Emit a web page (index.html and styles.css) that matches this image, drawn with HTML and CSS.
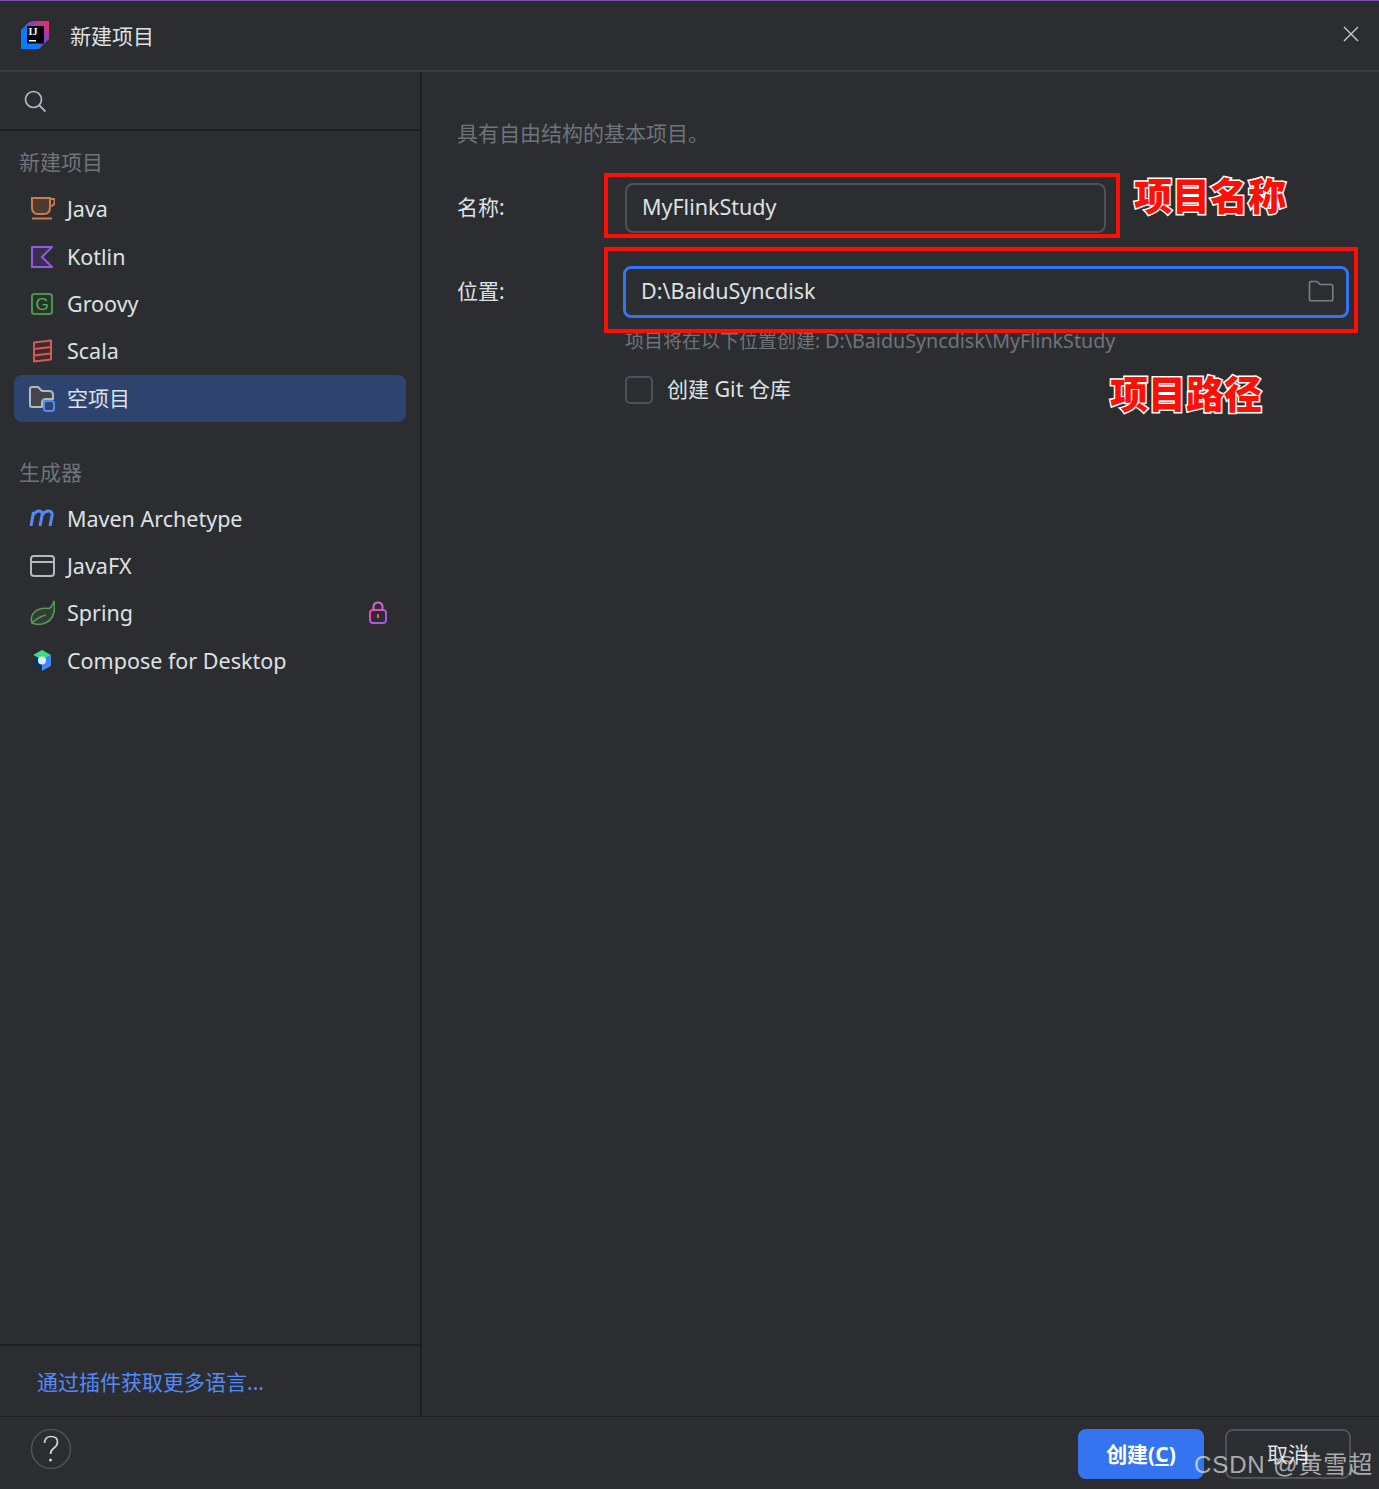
FILE: index.html
```html
<!DOCTYPE html>
<html lang="zh-CN">
<head>
<meta charset="utf-8">
<title>新建项目</title>
<link rel="stylesheet" href="styles.css">
</head>
<body>
<div class="dialog">
  <header class="titlebar">
    <svg class="logo" viewBox="0 0 28 28" width="28" height="28">
      <defs>
        <linearGradient id="lg2" x1="0" y1="1" x2="1" y2="0">
          <stop offset="0" stop-color="#087cfa"/><stop offset=".6" stop-color="#7a49c0"/><stop offset="1" stop-color="#fe2857"/>
        </linearGradient>
      </defs>
      <path d="M8 1L13 0H28V18L22 24L18 28H0V9Z" fill="url(#lg2)"/>
      <path d="M0 9L6 5V22H19L16 28H1Q0 28 0 27Z" fill="#087cfa"/>
      <rect x="6" y="5" width="17" height="17.500" fill="#000"/>
      <text x="7.500" y="14" class="logo-text">IJ</text>
      <rect x="8" y="19" width="7" height="1.500" fill="#fff"/>
    </svg>
    <span class="title">新建项目</span>
    <svg class="close" viewBox="0 0 16 16" width="16" height="16"><path d="M1 1L15 15M15 1L1 15" stroke="#ced0d6" stroke-width="1.300" fill="none"/></svg>
  </header>

  <div class="content">
    <aside class="sidebar">
      <div class="search">
        <svg viewBox="0 0 22 22" width="22" height="22"><circle cx="9.500" cy="9.500" r="8" fill="none" stroke="#b4b8bf" stroke-width="1.700"/><path d="M15.300 15.300L21.500 21.500" stroke="#b4b8bf" stroke-width="1.900"/></svg>
      </div>
      <nav class="nav">
        <div class="heading">新建项目</div>
        <div class="item">
          <svg class="ico" viewBox="0 0 26 26"><path d="M3 2H21V11Q21 18 15 18H9Q3 18 3 11Z" fill="#4f3a2d" stroke="#c77d4f" stroke-width="2"/><path d="M21 3H25.500V6Q25.500 10 21 10" fill="none" stroke="#c77d4f" stroke-width="2"/><path d="M3 22.500H23" stroke="#c77d4f" stroke-width="2"/></svg>
          <span class="latin">Java</span>
        </div>
        <div class="item">
          <svg class="ico" viewBox="0 0 26 26"><path d="M3 3H23L13 13L23 23H3Z" fill="#3a2f50" stroke="#955ae0" stroke-width="2" stroke-linejoin="round"/></svg>
          <span class="latin">Kotlin</span>
        </div>
        <div class="item">
          <svg class="ico" viewBox="0 0 26 26"><rect x="3" y="3" width="20" height="20" rx="2.500" fill="#253627" stroke="#4f9055" stroke-width="2"/><text x="13" y="19" class="g-text">G</text></svg>
          <span class="latin">Groovy</span>
        </div>
        <div class="item">
          <svg class="ico" viewBox="0 0 26 26"><path d="M5 4.500L22 2.500V21.500L5 23.500ZM5 11L22 9M5 17.500L22 15.500" fill="#3f2b2e" stroke="#d35b5b" stroke-width="2" stroke-linejoin="round"/></svg>
          <span class="latin">Scala</span>
        </div>
        <div class="item selected">
          <svg class="ico" viewBox="0 0 26 26"><path d="M13 21H3Q1 21 1 19V3Q1 1 3 1H9L13 5H20Q24 5 24 9V13H17Q13 13 13 17Z" fill="#43454a" stroke="#b4b8bf" stroke-width="2" stroke-linejoin="round"/><rect x="15" y="15" width="10" height="10" rx="2.500" fill="#2e436e" stroke="#548af7" stroke-width="2"/></svg>
          <span class="raise">空项目</span>
        </div>
        <div class="heading second">生成器</div>
        <div class="item">
          <svg class="ico" viewBox="0 0 26 26"><path d="M2 20L4.500 6M4.300 9Q7 5 10 5Q13.800 5 13 9.500L11 20M13 9Q16 5 19.500 5Q23.800 5 23 10L21 20" fill="none" stroke="#548af7" stroke-width="3"/></svg>
          <span class="latin">Maven Archetype</span>
        </div>
        <div class="item">
          <svg class="ico" viewBox="0 0 26 26"><rect x="2" y="3" width="23" height="20" rx="3" fill="none" stroke="#b4b8bf" stroke-width="2"/><path d="M2 9H25" stroke="#b4b8bf" stroke-width="2"/></svg>
          <span class="latin">JavaFX</span>
        </div>
        <div class="item">
          <svg class="ico" viewBox="0 0 26 26"><path d="M25 1Q24 6 20 8.500Q10 7 4.500 13Q1 17 3 23Q7 25 13 24Q23 22 25 12Q26 6 25 1ZM3 23Q9 17 17 15" fill="#2f3f30" stroke="#57965c" stroke-width="1.600"/></svg>
          <span class="latin">Spring</span>
          <svg class="lock" viewBox="0 0 20 24" width="20" height="24">
            <defs><linearGradient id="lk" x1="0" y1="0" x2="1" y2="1"><stop offset="0" stop-color="#ff45a4"/><stop offset="1" stop-color="#8b5cf6"/></linearGradient></defs>
            <rect x="2" y="9" width="16" height="13" rx="3" fill="none" stroke="url(#lk)" stroke-width="2"/>
            <path d="M5.500 9V6Q5.500 1.500 10 1.500Q14.500 1.500 14.500 6V9" fill="none" stroke="#d561d0" stroke-width="2"/>
            <path d="M10 13V17" stroke="#f04fa0" stroke-width="2"/>
          </svg>
        </div>
        <div class="item">
          <svg class="ico" viewBox="0 0 26 26"><path d="M13 2L22 7L13 12L4 7Z" fill="#3ddc84"/><path d="M22 7V18L13 23L13 12Z" fill="#4285f4"/><path d="M4 7V18L13 23V12Z" fill="#0f3350"/><circle cx="13" cy="12.500" r="4" fill="#d7efff"/></svg>
          <span class="latin">Compose for Desktop</span>
        </div>
      </nav>
      <div class="more"><a class="link">通过插件获取更多语言...</a></div>
    </aside>

    <main class="main">
      <p class="desc">具有自由结构的基本项目。</p>
      <div class="form">
        <label class="label name-label">名称:</label>
        <div class="input name-input"><span class="latin raise-s">MyFlinkStudy</span></div>
        <label class="label loc-label">位置:</label>
        <div class="input loc-input">
          <span class="latin raise-s">D:\BaiduSyncdisk</span>
          <svg class="folder" viewBox="0 0 26 22" width="26" height="22"><path d="M1.500 3Q1.500 1.500 3 1.500H9L12 4.500H23Q24.800 4.500 24.800 6.300V19Q24.800 20.800 23 20.800H3Q1.500 20.800 1.500 19Z" fill="none" stroke="#7a7e85" stroke-width="1.600"/></svg>
        </div>
        <div class="hint">项目将在以下位置创建: <span class="hint-path">D:\BaiduSyncdisk\MyFlinkStudy</span></div>
        <div class="check-row"><span class="checkbox"></span><span class="raise-s">创建 <span class="latin">Git</span> 仓库</span></div>
      </div>
    </main>
  </div>

  <footer class="footer">
    <svg class="help" viewBox="0 0 42 42" width="42" height="42"><circle cx="21" cy="21" r="19.500" fill="none" stroke="#4e5157" stroke-width="1.600"/><path d="M14.500 15Q15 8.500 21 8.500Q27.500 8.500 27.500 14Q27.500 17.500 24 20Q20.500 22.500 20.500 26" fill="none" stroke="#ced0d6" stroke-width="1.700"/><circle cx="20.500" cy="32" r="1.500" fill="#ced0d6"/></svg>
    <div class="actions">
      <button class="btn primary">创建(<u>C</u>)</button>
      <button class="btn secondary">取消</button>
    </div>
  </footer>

  <div class="redbox box-name"></div>
  <div class="redbox box-loc"></div>
  <div class="note note-name">项目名称</div>
  <div class="note note-loc">项目路径</div>
  <div class="watermark">CSDN @黄雪超</div>
</div>
</body>
</html>
```

FILE: styles.css
```css
* { box-sizing: border-box; }
html, body { margin: 0; padding: 0; }
body {
  width: 1379px;
  height: 1489px;
  overflow: hidden;
  background: #2b2d30;
  color: #dfe1e5;
  font-family: "Noto Sans", "Noto Sans CJK SC", sans-serif;
  font-size: 21px;
}
.dialog {
  position: relative;
  width: 1379px;
  height: 1489px;
  display: flex;
  flex-direction: column;
  border-top: 1px solid #7a4fb0;
}
.titlebar {
  flex: 0 0 71px;
  display: flex;
  align-items: center;
  padding: 0 20px 1px 21px;
  border-bottom: 2px solid #3a3c40;
}
.logo { margin-right: 21px; flex: none; }
.logo-text { font: bold 10px "Liberation Serif", serif; fill: #fff; }
.title { flex: 1; color: #dfe1e5; }
.close { flex: none; margin-bottom: 2px; }
.latin { font-size: 21.500px; }
.item .latin { padding-bottom: 1px; }
.raise { padding-bottom: 4px; }
.raise-s { padding-bottom: 3px; }

.content { flex: 1; display: flex; min-height: 0; }
.sidebar {
  width: 422px;
  flex: none;
  display: flex;
  flex-direction: column;
  border-right: 2px solid #1e1f22;
}
.search {
  flex: 0 0 59px;
  display: flex;
  align-items: center;
  padding: 1px 0 0 24px;
  border-bottom: 2px solid #1e1f22;
}
.nav { flex: 1; padding: 15px 14px 0; }
.heading {
  height: 32px;
  line-height: 32px;
  padding-left: 5px;
  color: #6f737a;
  margin-bottom: 7.500px;
}
.heading.second { margin-top: 33.500px; margin-bottom: 7px; }
.item {
  height: 47.400px;
  display: flex;
  align-items: center;
  padding: 0 18px 0 15px;
  border-radius: 8px;
  color: #dfe1e5;
  white-space: nowrap;
}
.item.selected { background: #2e436e; }
.ico { width: 26px; height: 26px; flex: none; margin-right: 12px; }
.g-text { font: 17px "Liberation Sans", sans-serif; fill: #5fa866; text-anchor: middle; }
.lock { margin-left: auto; flex: none; }
.more {
  flex: 0 0 72px;
  display: flex;
  align-items: center;
  padding-left: 37px;
  border-top: 2px solid #1e1f22;
}
.link { color: #548af7; }

.main { flex: 1; padding: 0 30px 0 35px; }
.desc { margin: 46px 0 0; height: 30px; line-height: 30px; color: #6f737a; }
.form {
  display: grid;
  grid-template-columns: 166px 1fr;
  margin-top: 35px;
}
.label { align-self: center; color: #dfe1e5; padding-bottom: 4px; }
.input {
  display: flex;
  align-items: center;
  justify-content: space-between;
  color: #dfe1e5;
}
.name-input {
  width: 481px;
  height: 50px;
  margin-left: 2px;
  padding-left: 15px;
  border: 2px solid #4e5157;
  border-radius: 8px;
}
.loc-input {
  height: 52px;
  margin-top: 33px;
  padding: 0 12px 0 15px;
  border: 3px solid #3574f0;
  border-radius: 8px;
}
.folder { margin-bottom: 2px; }
.loc-label { margin-top: 33px; }
.hint {
  grid-column: 2;
  margin: 8px 0 0 2px;
  height: 30px;
  line-height: 30px;
  font-size: 19px;
  color: #6f737a;
  white-space: nowrap;
}
.hint-path { font-size: 19.700px; }
.check-row {
  grid-column: 2;
  margin: 17px 0 0 2px;
  display: flex;
  align-items: center;
  gap: 14px;
  color: #dfe1e5;
}
.checkbox {
  width: 28px;
  height: 28px;
  border: 2px solid #4e5157;
  border-radius: 5px;
}

.footer {
  flex: 0 0 73px;
  display: flex;
  align-items: center;
  justify-content: space-between;
  padding: 0 28px 9px 30px;
  border-top: 1px solid #1e1f22;
}
.actions { display: flex; gap: 21px; margin-top: 11px; }
.btn {
  width: 126px;
  height: 50px;
  border-radius: 8px;
  font: inherit;
  padding: 0 0 2px;
}
.primary { background: #3574f0; color: #fff; border: none; font-weight: 700; }
.secondary { background: transparent; color: #dfe1e5; border: 2px solid #4e5157; }

.redbox { position: absolute; border: 4px solid #fe0f05; border-radius: 1px; }
.box-name { left: 604px; top: 172px; width: 516px; height: 65px; }
.box-loc { left: 604px; top: 246px; width: 754px; height: 86px; }
.note {
  position: absolute;
  font-family: "Noto Sans CJK SC", sans-serif;
  font-size: 38px;
  font-weight: 900;
  line-height: 44px;
  color: #fe0f05;
  -webkit-text-stroke: 3px #fff;
  paint-order: stroke fill;
  white-space: nowrap;
}
.note-name { left: 1134px; top: 171px; }
.note-loc { left: 1110px; top: 369px; }
.watermark {
  position: absolute;
  left: 1194px;
  top: 1447px;
  font-family: "Liberation Sans", "Noto Sans CJK SC", sans-serif;
  font-size: 24px;
  line-height: 34px;
  letter-spacing: .9px;
  color: rgba(255, 255, 255, .62);
  white-space: nowrap;
}
```
